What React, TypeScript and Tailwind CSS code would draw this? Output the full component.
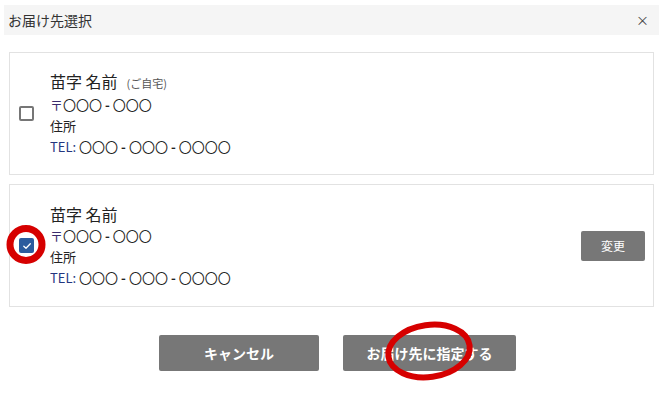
import React from 'react';

type Address = {
  name: string;
  tag?: string;
  postal: string[];
  address: string;
  tel: string[];
  checked: boolean;
  editable?: boolean;
};

const addresses: Address[] = [
  { name: '苗字 名前', tag: '(ご自宅)', postal: ['〇〇〇', '〇〇〇'], address: '住所', tel: ['〇〇〇', '〇〇〇', '〇〇〇〇'], checked: false },
  { name: '苗字 名前', postal: ['〇〇〇', '〇〇〇'], address: '住所', tel: ['〇〇〇', '〇〇〇', '〇〇〇〇'], checked: true, editable: true },
];

function Checkbox({ checked }: { checked: boolean }) {
  if (checked) {
    return (
      <span className="flex h-[15px] w-[15px] items-center justify-center rounded-[2px] bg-[#2b5c9e]">
        <svg width="10" height="10" viewBox="0 0 10 10" fill="none">
          <path d="M1.8 5.2 L4 7.3 L8.3 2.8" stroke="white" strokeWidth="1.3" strokeLinecap="round" strokeLinejoin="round" />
        </svg>
      </span>
    );
  }
  return <span className="block h-[15px] w-[15px] rounded-[2px] border-2 border-[#767676] bg-white" />;
}

// 〇〇〇 - 〇〇〇 style numbers with spaced hyphens
function Dashed({ parts }: { parts: string[] }) {
  return (
    <>
      {parts.map((p, i) => (
        <React.Fragment key={i}>
          {i > 0 && <span className="mx-[3px] font-bold">-</span>}
          {p}
        </React.Fragment>
      ))}
    </>
  );
}

function AddressCard({ item }: { item: Address }) {
  return (
    <div className="flex h-[123px] items-center border border-[#e2e2e2] pl-[9px] pr-[8px]">
      <Checkbox checked={item.checked} />
      <div className="ml-[16px] flex-1 text-[#222]">
        <div className="flex items-baseline leading-[22px]">
          <span className="text-[16px]">{item.name}</span>
          {item.tag && <span className="ml-[9px] text-[11px] text-[#555]">{item.tag}</span>}
        </div>
        <div className="text-[13px] leading-[21px]">
          <span className="text-[#3a2c6e]">〒</span>
          <Dashed parts={item.postal} />
        </div>
        <div className="text-[13px] leading-[21px]">{item.address}</div>
        <div className="text-[13px] leading-[21px]">
          <span className="text-[#24367f]">TEL:</span> <Dashed parts={item.tel} />
        </div>
      </div>
      {item.editable && (
        <button className="h-[30px] w-[64px] rounded-[2px] bg-[#777] text-[12px] text-white">変更</button>
      )}
    </div>
  );
}

export default function App() {
  return (
    <div
      className="relative h-[397px] w-[663px] overflow-hidden bg-white"
      style={{ fontFamily: '"Noto Sans CJK JP", "Noto Sans", sans-serif' }}
    >
      <div className="mx-[4px] mt-[5px] flex h-[30px] items-center justify-between bg-[#f5f5f5] pl-[4px] pr-[10px]">
        <span className="text-[14px] text-[#333]">お届け先選択</span>
        <span className="text-[13px] text-[#444]">×</span>
      </div>

      <div className="mx-[9px] mt-[17px] flex flex-col gap-[9px]">
        {addresses.map((a, i) => (
          <AddressCard key={i} item={a} />
        ))}
      </div>

      <div className="mt-[28px] flex justify-center gap-[24px] pl-[12px]">
        <button className="h-[36px] w-[160px] rounded-[2px] bg-[#777] text-[14px] font-bold text-white">キャンセル</button>
        <button className="h-[36px] w-[173px] rounded-[2px] bg-[#777] text-[14px] font-bold text-white">お届け先に指定する</button>
      </div>

      {/* annotation rings */}
      <svg className="pointer-events-none absolute left-0 top-0" width="663" height="397">
        <circle cx="26" cy="244.5" r="16" fill="none" stroke="#d60000" strokeWidth="7" />
        <ellipse cx="429" cy="351" rx="41" ry="26" fill="none" stroke="#d60000" strokeWidth="6" transform="rotate(-8 429 351)" />
      </svg>
    </div>
  );
}
